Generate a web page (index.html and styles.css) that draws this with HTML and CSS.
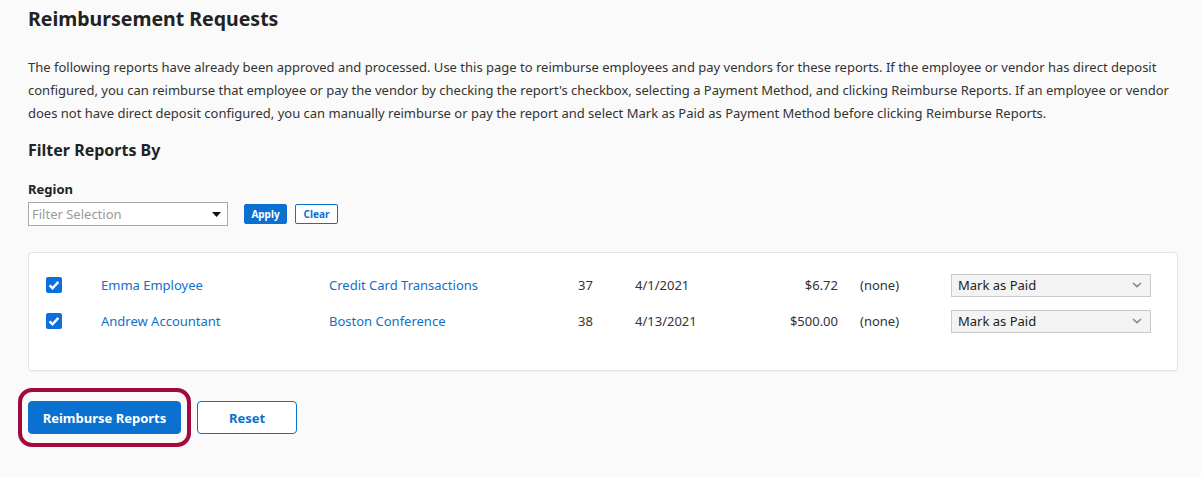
FILE: index.html
```html
<!DOCTYPE html>
<html lang="en">
  <head>
    <meta charset="utf-8" />
    <title>Reimbursement Requests</title>
    <link rel="stylesheet" href="styles.css">
  </head>
  <body>
    <h1 class="page-title">Reimbursement Requests</h1>
    <p class="intro">
      The following reports have already been approved and processed. Use this page to reimburse employees and pay vendors for these reports. If the employee or vendor has direct deposit configured, you can reimburse that employee or pay the vendor by checking the report's checkbox, selecting a Payment Method, and clicking Reimburse Reports. If an employee or vendor does not have direct deposit configured, you can manually reimburse or pay the report and select Mark as Paid as Payment Method before clicking Reimburse Reports.
    </p>

    <h2 class="section-title">Filter Reports By</h2>
    <div class="filter">
      <label class="filter-label">Region</label>
      <div class="filter-row">
        <div class="filter-select">
          <span>Filter Selection</span>
          <svg width="9" height="5" viewBox="0 0 9 5"><path d="M0 0h9L4.5 5z" fill="#111"/></svg>
        </div>
        <button class="btn-small btn-small-primary">Apply</button>
        <button class="btn-small btn-small-outline">Clear</button>
      </div>
    </div>

    <div class="panel">
      <div class="report-row">
        <span class="check"><svg width="16" height="16" viewBox="0 0 16 16"><rect width="16" height="16" rx="2" fill="#0b6fe0"/><path d="M3.6 8.4l2.9 2.8 5.9-6.3" fill="none" stroke="#fff" stroke-width="2.4"/></svg></span>
        <a class="link" href="#">Emma Employee</a>
        <a class="link" href="#">Credit Card Transactions</a>
        <span>37</span>
        <span>4/1/2021</span>
        <span class="amount">$6.72</span>
        <span class="none">(none)</span>
        <div class="method">
          <span>Mark as Paid</span>
          <svg width="10" height="6" viewBox="0 0 10 6"><path d="M1 1l4 3.6L9 1" fill="none" stroke="#888" stroke-width="1.6"/></svg>
        </div>
      </div>
      <div class="report-row">
        <span class="check"><svg width="16" height="16" viewBox="0 0 16 16"><rect width="16" height="16" rx="2" fill="#0b6fe0"/><path d="M3.6 8.4l2.9 2.8 5.9-6.3" fill="none" stroke="#fff" stroke-width="2.4"/></svg></span>
        <a class="link" href="#">Andrew Accountant</a>
        <a class="link" href="#">Boston Conference</a>
        <span>38</span>
        <span>4/13/2021</span>
        <span class="amount">$500.00</span>
        <span class="none">(none)</span>
        <div class="method">
          <span>Mark as Paid</span>
          <svg width="10" height="6" viewBox="0 0 10 6"><path d="M1 1l4 3.6L9 1" fill="none" stroke="#888" stroke-width="1.6"/></svg>
        </div>
      </div>
    </div>

    <div class="actions">
      <span class="highlight">
        <button class="btn btn-primary">Reimburse Reports</button>
      </span>
      <button class="btn btn-outline">Reset</button>
    </div>
  </body>
</html>
```

FILE: styles.css
```css
body {
  margin: 0;
  padding: 0 23px 40px 28px;
  background-color: #fafafa;
  color: #333;
  font-family: "Noto Sans", "Open Sans", sans-serif;
  font-size: 13px;
}

.page-title {
  margin: 0;
  padding-top: 6px;
  font-size: 19.5px;
  line-height: 26px;
  font-weight: 700;
  color: #222;
}

.intro {
  margin: 24px 0 0;
  line-height: 23px;
}

.section-title {
  margin: 14px 0 0;
  font-size: 16px;
  line-height: 22px;
  font-weight: 700;
  color: #222;
}

.filter {
  margin-top: 19px;
}

.filter-label {
  display: block;
  font-weight: 700;
  line-height: 18px;
  color: #222;
}

.filter-row {
  display: flex;
  align-items: center;
  margin-top: 4px;
}

.filter-select {
  box-sizing: border-box;
  width: 200px;
  height: 24px;
  display: flex;
  align-items: center;
  justify-content: space-between;
  padding: 0 6px 0 3px;
  background: #fff;
  border: 1px solid #a9a9a9;
  color: #9a9a9a;
}

.btn-small {
  box-sizing: border-box;
  height: 20px;
  width: 43px;
  padding: 0;
  border-radius: 2px;
  font-family: inherit;
  font-size: 10px;
  font-weight: 700;
}

.btn-small-primary {
  margin-left: 16px;
  background: #0b71d0;
  border: 1px solid #0b71d0;
  color: #fff;
}

.btn-small-outline {
  margin-left: 8px;
  background: #fff;
  border: 1px solid #0b71d0;
  color: #0b71d0;
}

.panel {
  margin-top: 26px;
  padding: 14px 0 31px 17px;
  background: #fff;
  border: 1px solid #e4e4e4;
  border-radius: 4px;
  box-shadow: 0 1px 2px rgba(0, 0, 0, 0.04);
}

.report-row {
  display: grid;
  grid-template-columns: 55px 228px 249px 57px 65px 138px 113px 200px;
  align-items: center;
  height: 36px;
}

.check {
  display: flex;
}

.link {
  color: #1070c9;
  text-decoration: none;
}

.amount {
  text-align: right;
}

.none {
  padding-left: 22px;
}

.method {
  box-sizing: border-box;
  height: 23px;
  display: flex;
  align-items: center;
  justify-content: space-between;
  padding: 0 8px 0 6px;
  background: #f3f3f3;
  border: 1px solid #cacaca;
  color: #222;
}

.actions {
  display: flex;
  align-items: center;
  gap: 16px;
  margin-top: 30px;
}

.btn {
  box-sizing: border-box;
  height: 33px;
  border-radius: 4px;
  font-family: inherit;
  font-size: 13px;
  font-weight: 700;
  padding: 0;
}

.btn-primary {
  width: 153px;
  background: #0b71d0;
  border: 1px solid #0b71d0;
  color: #fff;
}

.btn-outline {
  width: 100px;
  background: #fff;
  border: 1px solid #0b71d0;
  color: #0b71d0;
}

/* annotation ring around the main action */
.highlight {
  display: flex;
  margin: -13px -10px;
  padding: 9px 6px;
  border: 4px solid #a20a3d;
  border-radius: 14px;
}
```
